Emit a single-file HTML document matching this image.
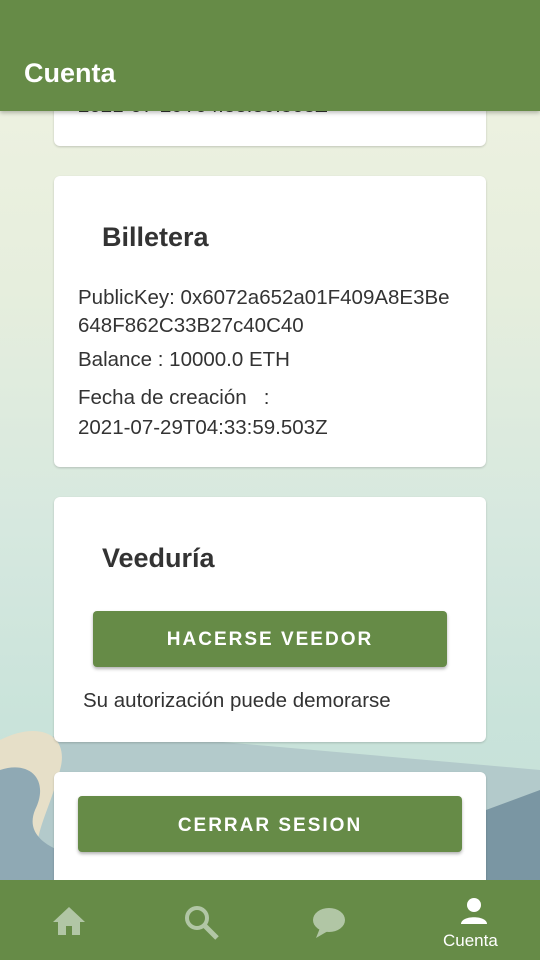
<!DOCTYPE html>
<html><head><meta charset="utf-8"><style>
*{margin:0;padding:0;box-sizing:border-box}
body{width:540px;height:960px;position:relative;overflow:hidden;font-family:"Liberation Sans",sans-serif;background:linear-gradient(180deg,#f0f3e2 0%,#e6eedd 30%,#d6e8df 55%,#c9e3da 75%,#c4ded6 100%)}
.bar{position:absolute;left:0;top:0;width:540px;height:111px;background:#668b47;box-shadow:0 2px 4px rgba(0,0,0,.25);z-index:5}
.bar span{position:absolute;left:24px;top:58px;color:#fff;font-size:27px;font-weight:bold}
.card{position:absolute;left:54px;width:432px;background:#fff;border-radius:6px;box-shadow:0 1px 2px rgba(0,0,0,.18);color:#333}
.t{position:absolute;font-size:20.5px;color:#333}
h2{position:absolute;left:48px;font-size:27px;color:#333}
.btn{position:absolute;background:#668b47;color:#fff;border-radius:4px;box-shadow:0 2px 3px rgba(0,0,0,.3);font-size:19px;font-weight:bold;letter-spacing:2px;text-align:center}
.nav{position:absolute;left:0;top:880px;width:540px;height:80px;background:#668b47;z-index:5}
</style></head><body>
<svg style="position:absolute;left:0;top:700px" width="540" height="190">
<path d="M0 60 C60 20 160 20 200 40 L540 70 L540 190 L0 190Z" fill="#b3cacb"/>
<path d="M0 40 C40 20 70 35 60 70 C50 110 30 140 40 160 L0 170Z" fill="#e6dfc8"/>
<path d="M0 70 C30 60 50 80 35 110 C25 135 45 155 120 165 L540 170 L540 190 L0 190Z" fill="#8fa9b4"/>
<path d="M486 110 L540 90 L540 190 L486 190Z" fill="#7a96a3"/>
</svg>
<div class="bar"><span>Cuenta</span></div>
<div class="card" style="top:80px;height:66px"><div class="t" style="left:24px;top:14px">2021-07-29T04:33:59.503Z</div></div>
<div class="card" style="top:176px;height:291px">
<h2 style="top:46px">Billetera</h2>
<div class="t" style="left:24px;top:108px;line-height:28px">PublicKey: 0x6072a652a01F409A8E3Be<br>648F862C33B27c40C40</div>
<div class="t" style="left:24px;top:172px">Balance : 10000.0 ETH</div>
<div class="t" style="left:24px;top:207px;line-height:30px">Fecha de creación &nbsp;&nbsp;:<br>2021-07-29T04:33:59.503Z</div>
</div>
<div class="card" style="top:497px;height:245px">
<h2 style="top:46px">Veeduría</h2>
<div class="btn" style="left:39px;top:114px;width:354px;height:56px;line-height:58px">HACERSE VEEDOR</div>
<div class="t" style="left:29px;top:192px">Su autorización puede demorarse</div>
</div>
<div class="card" style="top:772px;height:120px">
<div class="btn" style="left:24px;top:24px;width:384px;height:56px;line-height:60px">CERRAR SESION</div>
</div>
<div class="nav">
<svg style="position:absolute;left:52px;top:26px" width="34" height="30" viewBox="0 0 34 30"><path d="M17 1 L1 16 H6 V29 H14 V20 H20 V29 H28 V16 H33Z" fill="#b1c6a5"/></svg>
<svg style="position:absolute;left:183px;top:24px" width="38" height="38" viewBox="0 0 38 38"><circle cx="14" cy="14" r="10" fill="none" stroke="#b1c6a5" stroke-width="4"/><path d="M21 21 L34 34" stroke="#b1c6a5" stroke-width="5"/></svg>
<svg style="position:absolute;left:312px;top:26px" width="34" height="34" viewBox="0 0 34 34"><ellipse cx="17" cy="14" rx="16" ry="12" fill="#b1c6a5"/><path d="M8 22 L4 32 L16 25Z" fill="#b1c6a5"/></svg>
<svg style="position:absolute;left:458px;top:16px" width="32" height="30" viewBox="0 0 32 30"><circle cx="16" cy="9" r="7" fill="#fff"/><path d="M3 28 C3 19 29 19 29 28Z" fill="#fff"/></svg>
<div style="position:absolute;left:443px;top:51px;color:#fff;font-size:17px">Cuenta</div>
</div>
</body></html>
